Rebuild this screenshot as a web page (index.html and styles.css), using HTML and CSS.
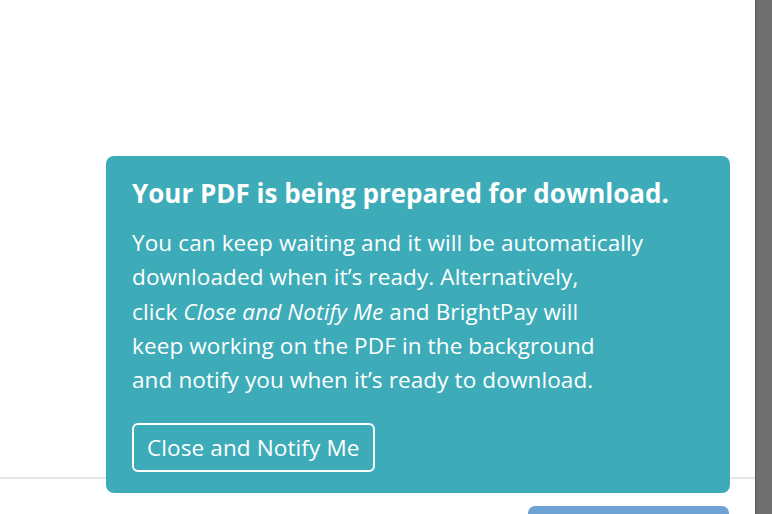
FILE: index.html
```html
<!DOCTYPE html>
<html>
<head>
<meta charset="utf-8">
<link rel="stylesheet" href="styles.css">
</head>
<body>
<div class="app">
  <div class="main">
    <div class="content"></div>
    <div class="footer">
      <div class="primary-btn"></div>
    </div>
  </div>
  <div class="scrollbar"></div>
</div>
<div class="toast">
  <h2 class="toast-title">Your PDF is being prepared for download.</h2>
  <p class="toast-text">You can keep waiting and it will be automatically<br>downloaded when it’s ready. Alternatively,<br>click <em>Close and Notify Me</em> and BrightPay will<br>keep working on the PDF in the background<br>and notify you when it’s ready to download.</p>
  <button class="toast-btn">Close and Notify Me</button>
</div>
</body>
</html>
```
FILE: styles.css
```css
html, body {
  margin: 0;
  padding: 0;
  height: 100%;
  overflow: hidden;
  font-family: "Open Sans", "Liberation Sans", sans-serif;
  background: #fff;
}
.app {
  display: flex;
  height: 514px;
  overflow: hidden;
}
.main {
  flex: 1;
  display: flex;
  flex-direction: column;
  overflow: hidden;
}
.content {
  height: 477px;
  flex-shrink: 0;
}
.footer {
  flex: 1;
  border-top: 2px solid #e2e5e9;
  display: flex;
  justify-content: flex-end;
  align-items: flex-start;
  padding: 27px 26px 0 0;
}
.primary-btn {
  width: 201px;
  height: 40px;
  flex-shrink: 0;
  background: #6fa3d6;
  border-radius: 7px;
}
.scrollbar {
  width: 16px;
  background: #6f6f6f;
  border-left: 1px solid #5a5a5a;
}
.toast {
  position: absolute;
  left: 106px;
  top: 156px;
  width: 624px;
  height: 337px;
  box-sizing: border-box;
  background: #3dacb8;
  border-radius: 8px;
  padding: 20px 26px 0 26px;
  color: #fff;
}
.toast-title {
  margin: 0;
  font-size: 26px;
  font-weight: 700;
  line-height: 34px;
}
.toast-text {
  margin: 16px 0 0 0;
  font-size: 22.5px;
  letter-spacing: 0.12px;
  line-height: 34.25px;
}
.toast-btn {
  display: block;
  margin-top: 26px;
  font-family: inherit;
  font-size: 22.5px;
  letter-spacing: 0.12px;
  color: #fff;
  background: transparent;
  border: 2px solid #fff;
  border-radius: 6px;
  padding: 0 13px;
  height: 49px;
}
```
